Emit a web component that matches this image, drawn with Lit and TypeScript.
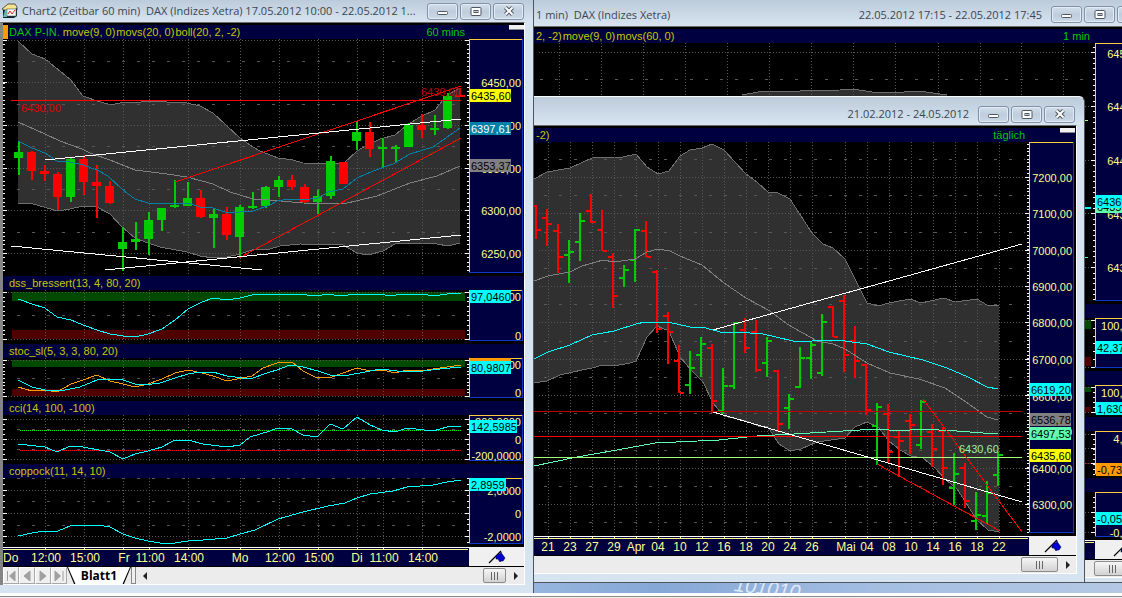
import { LitElement, html, svg, css, nothing } from "lit";
import { customElement, property } from "lit/decorators.js";

type Tag = { y: number; text: string; bg: string; fg?: string };
interface Pane {
  y: number;
  h: number;
  head: { text: string; green?: boolean }[];
  right?: string;
  dotted: number[];
  dashed: number[];
  ticks: [number, number, number];
  art: unknown;
  labels: [number, string][];
  tags: Tag[];
}
interface Sheet {
  key: string;
  box: { left: number; top: number; width: number; height: number };
  caption: string;
  range: string;
  x0: number;
  plotW: number;
  axisW: number;
  timeY: number;
  grid: number[];
  dashX: number;
  panes: Pane[];
  times: [number, string][];
  tabs?: boolean;
  icon?: boolean;
}

const UP = "#00cc00";
const DOWN = "#ff0000";
const CYAN = "#00ffff";
const NAVY = "#000040";

const line = (points: string, color: string, w = 1) =>
  svg`<polyline points=${points} fill="none" stroke=${color} stroke-width=${w}></polyline>`;
const level = (x1: number, x2: number, y: number, color: string, w = 1, dash = "none") =>
  svg`<line x1=${x1} x2=${x2} y1=${y + 0.5} y2=${y + 0.5} stroke=${color} stroke-width=${w} stroke-dasharray=${dash}></line>`;
const block = (x: number, y: number, w: number, h: number, color: string) =>
  svg`<rect x=${x} y=${y} width=${w} height=${h} fill=${color}></rect>`;
const band = (upper: string, lower: string) => {
  const back = lower.split(" ").reverse().join(" ");
  return svg`<polygon points="${upper} ${back}" fill="#303030"></polygon>${line(upper, "#707070")}${line(lower, "#707070")}`;
};
const zones = (top: number, th: number, low: number, lh: number, x = 12, w = 453) =>
  svg`${block(x, top, w, th, "#004a00")}${block(x, low, w, lh, "#500000")}`;

/* x, rising, high, low, body top, body bottom */
const candles: [number, number, number, number, number, number][] = [
  [18, 1, 141, 175, 152, 158], [31, 0, 151, 180, 152, 171], [44, 0, 165, 181, 171, 174], [57, 0, 172, 210, 174, 197],
  [70, 1, 158, 202, 159, 197], [83, 0, 155, 195, 159, 182], [96, 0, 165, 218, 182, 186], [109, 0, 181, 204, 186, 203],
  [122, 1, 227, 271, 242, 249], [135, 1, 222, 250, 239, 242], [148, 1, 212, 255, 220, 239], [161, 1, 208, 231, 208, 220],
  [174, 1, 180, 208, 205, 207], [187, 1, 182, 206, 198, 206], [200, 0, 190, 218, 198, 217], [213, 1, 208, 248, 214, 218],
  [226, 0, 207, 240, 214, 235], [239, 1, 205, 258, 207, 237], [252, 1, 192, 209, 206, 208], [265, 1, 186, 208, 187, 206],
  [278, 1, 176, 197, 180, 187], [291, 0, 175, 190, 180, 187], [304, 0, 184, 204, 187, 202], [317, 1, 190, 214, 196, 202],
  [330, 1, 156, 199, 161, 196], [343, 0, 162, 184, 162, 184], [356, 1, 121, 150, 132, 141], [369, 0, 122, 157, 132, 149],
  [382, 1, 138, 167, 147, 149], [395, 1, 145, 162, 147, 149], [408, 1, 123, 147, 125, 147], [421, 0, 114, 138, 125, 130],
  [434, 1, 115, 135, 128, 130], [447, 1, 93, 129, 96, 128],
];

/* x, rising, high, low, open, close */
const bars: [number, number, number, number, number, number][] = [
  [535, 0, 205, 239, 206, 230], [546, 0, 209, 246, 218, 224], [557, 0, 224, 273, 231, 257], [568, 1, 240, 283, 255, 252],
  [579, 1, 213, 261, 242, 221], [590, 0, 194, 223, 211, 222], [601, 0, 210, 251, 230, 251], [612, 0, 253, 308, 257, 296],
  [623, 1, 265, 287, 278, 270], [634, 1, 229, 282, 260, 230], [645, 0, 221, 257, 231, 257], [656, 0, 270, 333, 272, 329],
  [667, 0, 312, 364, 316, 332], [678, 0, 345, 393, 361, 393], [689, 1, 351, 394, 385, 368], [700, 1, 337, 377, 355, 344],
  [711, 0, 344, 413, 348, 401], [722, 1, 368, 414, 411, 386], [733, 1, 322, 389, 386, 323], [744, 0, 318, 353, 330, 348],
  [755, 0, 320, 372, 332, 370], [766, 1, 337, 377, 363, 341], [777, 0, 370, 432, 371, 424], [788, 1, 394, 429, 408, 399],
  [799, 1, 347, 388, 387, 358], [810, 1, 341, 379, 358, 345], [821, 1, 314, 376, 373, 322], [832, 0, 306, 337, 307, 337],
  [843, 0, 295, 372, 301, 355], [854, 0, 326, 378, 341, 361], [865, 0, 364, 415, 365, 410], [876, 1, 403, 465, 426, 407],
  [887, 0, 404, 463, 414, 452], [898, 0, 431, 477, 437, 441], [909, 0, 414, 454, 421, 425], [920, 1, 400, 449, 445, 402],
  [931, 0, 424, 467, 432, 449], [942, 0, 427, 485, 431, 468], [953, 1, 453, 505, 488, 474], [964, 0, 463, 508, 468, 501],
  [975, 1, 492, 530, 521, 515], [986, 1, 481, 524, 516, 493], [997, 1, 452, 486, 475, 455],
];

const hourArt = svg`
  ${band(
    "18,41 32,54 45,59 71,80 83,96 97,101 108,104 115,104 125,102 135,103 147,101 187,103 200,106 213,113 240,138 253,147 260,151 278,158 293,160 303,163 343,164 357,151 367,145 380,139 395,135 407,125 420,117 435,110 447,95 460,88",
    "18,203 33,204 58,211 70,209 83,206 97,207 110,214 122,227 135,238 148,243 160,247 187,252 200,256 213,258 227,257 240,254 252,250 270,249 280,246 300,244 343,245 357,253 368,255 383,251 395,244 427,243 437,244 448,246 460,243"
  )}`;
const hourLines = svg`
  ${candles.map(([x, up, hi, lo, t, b]) => svg`${block(x, hi, 2, lo - hi, up ? UP : DOWN)}${block(x - 4, t, 9, Math.max(2, b - t), up ? UP : DOWN)}`)}
  ${line("18,122 45,134 60,141 82,149 90,153 110,160 135,170 167,174 187,177 213,184 230,192 253,199 270,200 303,203 343,204 377,196 410,183 437,176 460,166", "#808080")}
  ${line("18,141 32,148 45,153 57,161 70,162 83,165 97,170 108,176 123,190 135,199 148,203 177,204 188,203 200,207 213,208 228,213 253,211 270,205 277,201 290,199 310,199 318,198 328,192 343,189 357,178 373,171 393,164 410,154 433,147 443,140 460,128", "#0080a8")}
  ${block(11, 100, 450, 1, DOWN)}
  ${line("175,182 461,86", DOWN)}${line("239,258 461,138", DOWN)}
  ${line("45,160 461,119", "#fff")}${line("11,246 262,270", "#fff")}${line("105,270 461,235", "#fff")}
  ${block(459, 88, 2, 8, DOWN)}${block(455, 95, 10, 2, DOWN)}
  <text x="21" y="112" fill="#e00000">6430,00</text>
  <text x="421" y="96" fill="#c00000">6430,00</text>`;

const hourly: Sheet = {
  key: "hourly",
  box: { left: 0, top: 0, width: 534, height: 593 },
  caption: "Chart2 (Zeitbar 60 min)\u00a0 DAX (Indizes Xetra) 17.05.2012 10:00 - 22.05.2012 1...",
  range: "",
  icon: true,
  tabs: true,
  x0: 3,
  plotW: 466,
  axisW: 54,
  timeY: 547,
  grid: [45, 84, 123, 149, 188, 240, 279, 318, 357, 383, 422],
  dashX: 17,
  times: [[3, "Do"], [46, "12:00"], [85, "15:00"], [124, "Fr"], [150, "11:00"], [189, "14:00"], [240, "Mo"], [280, "12:00"], [319, "15:00"], [357, "Di"], [384, "11:00"], [423, "14:00"]],
  panes: [
    {
      y: 39, h: 237,
      head: [{ text: "DAX P-IN.", green: true }, { text: "move(9, 0)" }, { text: "movs(20, 0)" }, { text: "boll(20, 2, -2)" }],
      right: "60 mins",
      dotted: [40, 82, 125, 168, 210, 253], dashed: [61, 104, 146, 189, 232], ticks: [40, 271, 4.26],
      art: [hourArt, hourLines],
      labels: [[82, "6450,00"], [125, "6400,00"], [168, "6350,00"], [210, "6300,00"], [253, "6250,00"]],
      tags: [{ y: 89, text: "6435,60", bg: "#ffff00" }, { y: 122, text: "6397,61", bg: "#0080a8", fg: "#fff" }, { y: 159, text: "6353,37", bg: "#808080" }],
    },
    {
      y: 290, h: 54, head: [{ text: "dss_bressert(13, 4, 80, 20)" }],
      dotted: [292, 339], dashed: [315], ticks: [292, 340, 4.7],
      art: [zones(292, 9, 330, 9), line("18,299 32,304 45,308 57,317 71,320 83,325 97,330 110,334 123,336 135,337 148,334 162,329 175,320 188,309 202,302 213,298 227,300 240,298 252,295 275,294 297,294 317,296 328,294 340,296 357,294 380,294 390,296 403,294 423,294 433,296 447,294 461,293", CYAN)],
      labels: [[296, "100,0000"], [335, "0"]],
      tags: [{ y: 290, text: "97,0460", bg: CYAN }],
    },
    {
      y: 358, h: 43, head: [{ text: "stoc_sl(5, 3, 3, 80, 20)" }],
      dotted: [360, 396], dashed: [378], ticks: [360, 397, 3.6],
      art: [
        zones(360, 7, 389, 7),
        line("18,387 32,391 45,390 57,392 71,384 83,380 97,375 110,381 123,384 135,387 148,384 162,379 175,373 188,370 202,373 213,376 227,381 252,376 263,368 277,363 292,362 303,371 317,378 332,377 343,373 357,368 370,371 383,370 395,373 407,370 427,370 440,368 461,365", "#ff9900"),
        line("18,380 32,387 45,390 60,391 80,387 97,380 108,379 123,380 135,384 145,385 160,383 175,378 188,374 200,372 213,372 227,376 250,379 270,372 277,370 290,365 303,367 318,371 330,375 343,376 360,373 380,369 397,371 423,371 440,369 461,367", CYAN),
      ],
      labels: [[364, "100,0000"], [392, "0"]],
      tags: [{ y: 358, text: "", bg: "#ff9900" }, { y: 361, text: "80,9807", bg: CYAN }],
    },
    {
      y: 415, h: 49, head: [{ text: "cci(14, 100, -100)" }],
      dotted: [419, 439, 459], dashed: [429, 449], ticks: [419, 461, 5],
      art: [
        level(20, 461, 430, "#00ff00", 1, "1 1"), level(20, 461, 450, DOWN, 1, "1 1"),
        line("18,444 45,447 57,452 70,446 83,447 110,452 123,459 135,454 148,451 162,447 173,441 188,440 203,444 227,447 240,445 250,437 270,431 277,428 292,429 303,435 317,437 330,424 343,429 357,417 370,425 382,430 395,432 407,428 433,431 447,427 461,426", CYAN),
      ],
      labels: [[421, "200,0000"], [439, "0"], [455, "-200,0000"]],
      tags: [{ y: 420, text: "142,5985", bg: CYAN }],
    },
    {
      y: 478, h: 69, head: [{ text: "coppock(11, 14, 10)" }],
      dotted: [490, 513, 536], dashed: [478, 501, 525], ticks: [478, 545, 5.8],
      art: [nothing, line("18,536 32,533 45,531 58,531 70,526 83,525 98,525 110,527 123,534 135,538 148,541 160,543 175,543 188,541 203,540 227,538 240,534 255,530 278,519 303,512 328,506 345,503 357,498 370,494 393,491 407,487 433,485 447,482 461,480", CYAN)],
      labels: [[490, "2,0000"], [513, "0"], [536, "-2,0000"]],
      tags: [{ y: 478, text: "2,8959", bg: CYAN }],
    },
  ],
};

const daily: Sheet = {
  key: "daily",
  box: { left: 534, top: 96, width: 551, height: 487 },
  caption: "",
  range: "21.02.2012 - 24.05.2012",
  x0: 534,
  plotW: 495,
  axisW: 45,
  timeY: 536,
  grid: [548, 570, 592, 614, 636, 658, 680, 702, 724, 746, 768, 790, 812, 845, 867, 889, 911, 933, 955, 977, 999],
  dashX: 544,
  times: [[548, "21"], [570, "23"], [592, "27"], [614, "29"], [636, "Apr"], [658, "04"], [680, "10"], [702, "12"], [724, "16"], [746, "18"], [768, "20"], [790, "24"], [812, "26"], [846, "Mai"], [867, "04"], [889, "08"], [911, "10"], [933, "14"], [955, "16"], [977, "18"], [999, "22"]],
  panes: [
    {
      y: 142, h: 394, head: [{ text: "-2)" }], right: "täglich",
      dotted: [177, 213, 250, 286, 322, 359, 395, 431, 468, 504],
      dashed: [159, 195, 232, 268, 304, 341, 377, 413, 450, 486, 522],
      ticks: [144, 534, 3.63],
      art: [
        band(
          "534,179 547,172 570,168 592,158 623,157 636,154 647,167 658,174 669,171 680,156 690,150 702,148 712,144 724,150 746,174 757,182 768,192 778,193 790,199 812,233 823,244 833,248 845,259 867,303 878,306 889,303 910,299 921,303 944,298 955,302 977,299 987,305 999,305",
          "534,383 547,381 560,375 582,370 592,368 603,365 614,366 630,363 636,361 647,337 657,326 669,331 680,357 692,371 703,382 713,403 724,416 746,421 758,426 768,427 779,444 790,451 801,449 817,442 845,438 855,427 867,422 878,427 889,441 900,450 911,456 923,458 934,467 945,479 957,489 966,503 977,520 988,530 999,532"
        ),
        bars.map(([x, up, hi, lo, o, c]) => svg`${block(x, hi, 2, lo - hi, up ? UP : DOWN)}${block(x - 4, o - 1, 4, 2, up ? UP : DOWN)}${block(x + 2, c - 1, 4, 2, up ? UP : DOWN)}`),
        line("534,281 548,276 570,272 582,266 603,260 614,262 635,259 647,252 658,249 670,251 680,256 702,265 724,283 746,298 770,311 787,324 817,341 833,344 845,349 867,363 890,373 919,379 945,388 966,402 987,417 998,420", "#808080"),
        line("534,359 548,352 570,345 592,335 614,331 636,324 645,322 668,322 690,327 702,327 724,333 737,332 763,334 793,341 812,341 830,340 845,341 867,344 889,352 923,360 947,368 968,377 987,387 998,389", CYAN),
        line("534,466 577,457 617,450 655,443 719,440 757,436 794,434 843,431 877,429 900,431 921,429 957,431 983,433 998,433", "#60ffb0"),
        block(534, 411, 488, 1, "#c00000"), block(534, 436, 488, 1, DOWN), block(534, 457, 488, 1, "#a0ff80"),
        line("713,330 1022,244", "#fff"), line("713,412 1022,502", "#fff"),
        line("923,399 1022,532", DOWN), line("877,464 1000,531", DOWN),
        svg`<text x="959" y="453" fill="#a0f0a0">6430,60</text>`,
      ],
      labels: [[177, "7200,00"], [213, "7100,00"], [250, "7000,00"], [286, "6900,00"], [322, "6800,00"], [359, "6700,00"], [396, "6600,00"], [431, "6500,00"], [468, "6400,00"], [504, "6300,00"]],
      tags: [{ y: 383, text: "6619,20", bg: CYAN }, { y: 413, text: "6536,78", bg: "#808080" }, { y: 427, text: "6497,53", bg: "#60ffb0" }, { y: 449, text: "6435,60", bg: "#ffff00" }],
    },
  ],
};

const minute: Sheet = {
  key: "minute",
  box: { left: 534, top: 0, width: 624, height: 583 },
  caption: "1 min)\u00a0 DAX (Indizes Xetra)",
  range: "22.05.2012 17:15 - 22.05.2012 17:45",
  x0: 534,
  plotW: 561,
  axisW: 54,
  timeY: 540,
  grid: [559, 601, 643, 685, 727, 769, 811, 853, 895, 938, 980, 1021, 1063],
  dashX: 540,
  times: [],
  panes: [
    {
      y: 43, h: 261, head: [{ text: "2, -2)" }, { text: "move(9, 0)" }, { text: "movs(60, 0)" }], right: "1 min",
      dotted: [52, 106, 160, 213, 267], dashed: [79], ticks: [47, 300, 5.37],
      art: [
        band("742,95 764,91 800,91 840,90 853,89 872,92 904,92 919,91 947,95", "742,98 947,98"),
        block(1085, 207, 6, 2, CYAN), block(1085, 120, 3, 1, "#a0ff80"), block(1085, 257, 3, 1, "#60ffb0"),
      ],
      labels: [[53, "6450,00"], [106, "6445,00"], [160, "6440,00"], [214, "6435,00"], [267, "6430,00"]],
      tags: [{ y: 200, text: "6435,60", bg: "#60ffb0" }, { y: 195, text: "6436,15", bg: CYAN }],
    },
    {
      y: 318, h: 53, head: [], dotted: [320, 367], dashed: [], ticks: [320, 368, 7.8],
      art: zones(320, 9, 357, 9, 1085, 6), labels: [[325, "100,0000"]], tags: [{ y: 341, text: "42,3700", bg: CYAN }],
    },
    {
      y: 385, h: 32, head: [], dotted: [387, 412], dashed: [], ticks: [387, 414, 5],
      art: zones(387, 5, 407, 5, 1085, 6), labels: [[392, "100,0000"]], tags: [{ y: 402, text: "1,6300", bg: CYAN }],
    },
    {
      y: 431, h: 47, head: [], dotted: [434, 448, 463], dashed: [], ticks: [434, 476, 5],
      art: block(1085, 463, 6, 1, "#a00000"), labels: [[438, "4,0000"]], tags: [{ y: 463, text: "-0,7300", bg: "#ff9900" }],
    },
    {
      y: 492, h: 48, head: [], dotted: [512, 532], dashed: [], ticks: [497, 534, 5],
      art: nothing, labels: [[532, "-0,2000"]], tags: [{ y: 512, text: "-0,0520", bg: CYAN }],
    },
  ],
};

@customElement("chart-window")
export class ChartWindow extends LitElement {
  @property({ attribute: false }) sheet!: Sheet;

  static styles = css`
    :host {
      display: flex;
      flex-direction: column;
      box-sizing: border-box;
      height: 100%;
      background: #d6e3f1;
      border-right: 1px solid #50555c;
      border-bottom: 1px solid #50555c;
      font: 11px/14px "Liberation Sans", Arial, sans-serif;
    }
    :host(.hourly) { border-bottom: 0; }
    :host(.daily) { border-top: 1px solid #f8fbff; border-top-right-radius: 6px; }
    .frame { display: contents; }
    .title {
      display: flex;
      align-items: center;
      gap: 2px;
      flex: none;
      height: 22px;
      padding: 0 9px 0 2px;
      background: linear-gradient(#bccbda, #d8e4f1);
      color: #3c4650;
      font: 11px/16px "Open Sans", "Noto Sans", sans-serif;
    }
    .minute .title { height: 26px; padding-top: 3px; box-sizing: border-box; }
    .daily .title { height: 28px; padding-top: 6px; box-sizing: border-box; border-top-right-radius: 6px; }
    .icon { flex: none; margin-right: 2px; }
    .caption { flex: 1; white-space: pre; overflow: hidden; }
    .range { white-space: nowrap; margin-right: 7px; }
    .ctl {
      display: grid;
      place-items: center;
      width: 31px;
      height: 17px;
      padding: 0;
      background: linear-gradient(#d3deea, #bfcddc 50%, #cbd8e6);
      border: 1px solid #8391a6;
      border-radius: 3px;
      box-shadow: inset 0 0 0 1px #e3ecf5;
    }
    .body {
      flex: none;
      margin-right: 7px;
      border-right: 1px solid #fff;
      border-top: 1px solid #6c6c6c;
      background: #000;
      padding-top: 2px;
    }
    .hourly .body { border-left: 3px solid #848484; margin-right: 8px; }
    .head {
      display: flex;
      gap: 1px;
      height: 14px;
      background: #000040;
      color: #c8c800;
      padding-left: 6px;
      white-space: pre;
    }
    .minute .head, .daily .head { padding-left: 2px; }
    .daily .head { padding-right: 1px; }
    .head.first { padding-left: 0; }
    .marker { width: 5px; height: 14px; background: #ff9900; }
    .green { color: #00c800; margin-right: 2px; }
    .interval { margin-left: auto; color: #00c800; }
    .stub {
      width: 15px; height: 5px; padding: 0; margin-left: 43px;
      background: #f0f0f0; border: 0; border-bottom: 1px solid #888;
    }
    .daily .stub { margin-left: 34px; }
    .row { display: flex; }
    svg { display: block; flex: none; }
    .bottom { display: flex; height: 19px; border-bottom: 1px solid #000; background: #f0f0f0; }
    .flag { flex: 1; display: grid; place-items: center; border: 0; padding: 0; background: #f0f0f0; }
    .foot { display: flex; height: 17px; background: #ececec; align-items: stretch; border-bottom: 1px solid #fff; }
    .foot button { padding: 0; }
    .nav {
      width: 16px; display: grid; place-items: center;
      background: #f0f0f0; border: 1px solid #a8a8a8; border-left-color: #fff; border-top-color: #fff;
    }
    .tabwrap { display: flex; padding: 0 1px; background: #000; clip-path: polygon(0 0, 100% 0, 89% 100%, 11% 100%); }
    .tab {
      width: 62px; border: 0; background: #fff;
      clip-path: polygon(0 0, 100% 0, 88% 100%, 12% 100%);
      font: bold 12px/16px "Open Sans", "Noto Sans", sans-serif; color: #000;
    }
    .split { width: 3px; border: 1px solid #888; border-top: 0; background: #f0f0f0; }
    .arrow { width: 18px; border: 0; background: none; display: grid; place-items: center; }
    .track { flex: 1; }
    .thumb {
      width: 37px; display: grid; place-items: center; margin: 1px 0;
      border: 1px solid #8c8c8c; border-radius: 2px; background: linear-gradient(#f6f6f6, #d2d2d2);
    }
    .hourly .thumb { width: 23px; }
  `;

  private controls() {
    return html`
      <button class="ctl" aria-label="Minimieren">
        <svg width="13" height="9"><rect x="1.5" y="4.5" width="10" height="3" rx="1" fill="#fff" stroke="#4c5560"></rect></svg>
      </button>
      <button class="ctl" aria-label="Maximieren">
        <svg width="12" height="9"><rect x="1" y="0.5" width="10" height="8" rx="1" fill="#fff" stroke="#4c5560"></rect><rect x="4" y="3.5" width="4" height="2" fill="#c0ccd8" stroke="#4c5560"></rect></svg>
      </button>
      <button class="ctl" aria-label="Schließen">
        <svg width="12" height="10" viewBox="0 0 12 10"><path d="M2.5 1.5 9.5 8.5M9.5 1.5 2.5 8.5" stroke="#4c5560" stroke-width="4"></path><path d="M2.5 1.5 9.5 8.5M9.5 1.5 2.5 8.5" stroke="#fff" stroke-width="2"></path></svg>
      </button>`;
  }

  private ticks(p: Pane) {
    const { x0, plotW, key } = this.sheet;
    const r = x0 + plotW;
    const out = [];
    for (let y = p.ticks[0]; y <= p.ticks[1]; y += p.ticks[2]) {
      const t = Math.round(y);
      if (key === "hourly") out.push(block(x0, t, 2, 1, "#fff"));
      out.push(block(r - 2, t, 2, 1, "#fff"));
    }
    for (const t of p.dotted) {
      if (key === "hourly") out.push(block(x0, t, 4, 1, "#fff"));
      out.push(block(r - 4, t, 4, 1, "#fff"));
    }
    return out;
  }

  private pane(p: Pane, i: number) {
    const { x0, plotW, axisW, grid, dashX, key } = this.sheet;
    const ax = x0 + plotW;
    const right = x0 + plotW - 4;
    const axisH = p.h - 3;
    const first = key === "hourly" && i === 0;
    return html`
      <div class="head ${first ? "first" : ""}">
        ${first ? html`<span class="marker"></span>` : nothing}
        ${p.head.map((h) => html`<span class=${h.green ? "green" : ""}>${h.text}</span>`)}
        ${p.right ? html`<span class="interval">${p.right}</span><button class="stub" aria-label="Fensterausschnitt"></button>` : nothing}
      </div>
      <div class="row">
        <svg width=${plotW} height=${p.h} viewBox="${x0} ${p.y} ${plotW} ${p.h}" shape-rendering="crispEdges">
          ${Array.isArray(p.art) ? p.art[0] : p.art}
          <g stroke="#585858">
            ${grid.map((x) => svg`<line x1=${x + 0.5} x2=${x + 0.5} y1=${p.y} y2=${p.y + p.h - 2} stroke-dasharray="1 2"></line>`)}
            ${p.dotted.map((y) => svg`<line x1=${x0 + 5} x2=${right} y1=${y + 0.5} y2=${y + 0.5} stroke-dasharray="1 2"></line>`)}
            ${p.dashed.map((y) => svg`<line x1=${dashX} x2=${right} y1=${y + 0.5} y2=${y + 0.5} stroke-dasharray="3 12"></line>`)}
          </g>
          ${Array.isArray(p.art) ? p.art.slice(1) : nothing}
          ${this.ticks(p)}
        </svg>
        <svg width=${axisW} height=${p.h} viewBox="${ax} ${p.y} ${axisW} ${p.h}" shape-rendering="crispEdges">
          ${block(ax, p.y, axisW, axisH, "#1038c8")}
          ${block(ax, p.y, axisW - 1, axisH - 1, "#ffcc40")}
          ${block(ax + 1, p.y + 1, axisW - 2, axisH - 2, NAVY)}
          ${p.labels.map(([y, t]) => svg`<text x=${ax + axisW - 2} y=${y + 5} text-anchor="end" fill="#ffff90">${t}</text>`)}
          ${p.tags.map((t) => svg`${block(ax + 1, t.y, t.text.length > 7 ? 47 : t.text.length === 6 ? 36 : 41, 13, t.bg)}<text x=${ax + 2} y=${t.y + 11} fill=${t.fg ?? "#000"}>${t.text}</text>`)}
        </svg>
      </div>`;
  }

  render() {
    const s = this.sheet;
    const y = s.timeY;
    return html`<div class="frame ${s.key}">
      <div class="title">
        ${s.icon
          ? html`<svg class="icon" width="16" height="16" viewBox="0 0 16 16">
              <path d="M0 6 6 1h7l2 3v3H2z" fill="#f4e48c" stroke="#333" stroke-width=".8"></path>
              <path d="M1 14V7h11l3-2v8l-3 2H1z" fill="#0d2230"></path>
              <rect x="5" y="6" width="9" height="7" fill="#fff" stroke="#555" stroke-width=".6"></rect>
              <path d="M1 14 3 7h2v7z" fill="#60b8b0"></path>
              <path d="m6 11 2-3 2 3 3-4" fill="none" stroke="#e02020"></path>
            </svg>`
          : nothing}
        <span class="caption">${s.caption}</span>
        ${s.range ? html`<span class="range">${s.range}</span>` : nothing}
        ${this.controls()}
      </div>
      <div class="body">
        ${s.panes.map((p, i) => this.pane(p, i))}
        <div class="bottom">
          <svg width=${s.plotW} height="19" viewBox="${s.x0} ${y} ${s.plotW} 19" shape-rendering="crispEdges" font-size="12">
            ${block(s.x0, y, s.plotW, 19, NAVY)}
            ${block(s.x0, y, s.plotW, 1, "#fff")}
            ${block(s.x0, y + 2, s.plotW - 1, 1, "#ffff80")}
            ${s.grid.map((x) => block(x, y + 1, 1, 2, "#ffff80"))}
            ${s.times.map(([x, t]) => svg`<text x=${x} y=${y + 15} text-anchor=${t === "Do" ? "start" : "middle"} fill="#ffff90">${t}</text>`)}
          </svg>
          <button class="flag" aria-label="Anheften">
            <svg width="18" height="14" viewBox="0 0 18 14"><path d="M1 13 13 1" stroke="#000" stroke-width="1.2"></path><path d="m8 6 2-2 2 0 1-2 1 2 3 4-2 3-2 0-1 1-2-3-2 0z" fill="#0000d0" stroke="#000030" stroke-width=".6"></path></svg>
          </button>
        </div>
        <div class="foot">
          ${s.tabs
            ? html`
                ${["M2.5 1v10M10 1v10L4.5 6z", "M9 1v10L3 6z", "M3 1v10l6-5z", "M2 1v10l5.500-5zM10 1v10"].map(
                  (d, i) => html`<button class="nav" aria-label="Blatt ${i + 1} von 4"><svg width="12" height="12"><path d=${d} fill="#a0a0a0" stroke="#a0a0a0"></path></svg></button>`
                )}
                <span class="tabwrap"><button class="tab">Blatt1</button></span>
                <span class="split"></span>
                <button class="arrow" aria-label="Nach links"><svg width="5" height="8"><path d="M4 0v8L0 4z" fill="#222"></path></svg></button>`
            : nothing}
          <span class="track"></span>
          <button class="thumb" aria-label="Bildlauf"><svg width="9" height="8"><path d="M1.5 0v8M4.5 0v8M7.5 0v8" stroke="#666"></path></svg></button>
          <button class="arrow" aria-label="Nach rechts"><svg width="5" height="8"><path d="M1 0v8l4-4z" fill="#222"></path></svg></button>
        </div>
      </div>
    </div>`;
  }
}

@customElement("app-root")
export class AppRoot extends LitElement {
  static styles = css`
    :host { display: flex; flex-direction: column; height: 100vh; overflow: hidden; }
    .desktop {
      position: relative; flex: 1; overflow: hidden;
      background: linear-gradient(100deg, #8fb0dc 0, #9ab8e0 50%, #86a8d6 62%, #a4bee2 80%, #b4c8e4 100%);
    }
    .window { position: absolute; }
    .digits {
      position: absolute; left: 734px; bottom: -5px; color: #dfeafa;
      font: italic 20px/20px "Liberation Sans", Arial, sans-serif;
      rotate: 7deg;
    }
    .status { flex: none; height: 5px; box-sizing: border-box; background: linear-gradient(#fff 0 3px, #8a8a8a 3px 4px, #f0f0f0 4px); }
  `;

  render() {
    return html`
      <main class="desktop">
        <span class="digits" aria-hidden="true">101010</span>
        ${[minute, daily, hourly].map(
          (s) => html`<section class="window" style="left:${s.box.left}px;top:${s.box.top}px;width:${s.box.width}px;height:${s.box.height}px">
            <chart-window class=${s.key} .sheet=${s}></chart-window>
          </section>`
        )}
      </main>
      <footer class="status"></footer>`;
  }
}
